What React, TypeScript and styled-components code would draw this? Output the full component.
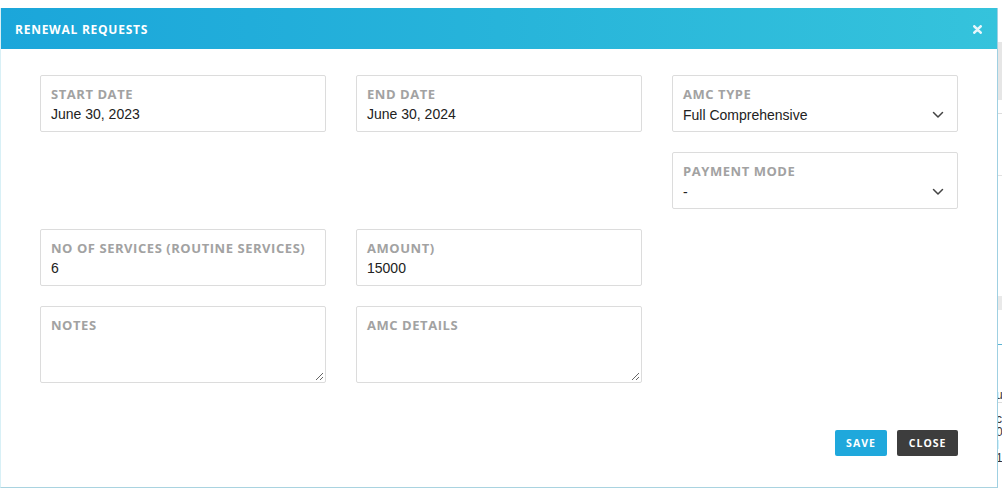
import React from "react";
import styled, { createGlobalStyle } from "styled-components";

const GlobalStyle = createGlobalStyle`
  html, body {
    margin: 0;
    padding: 0;
    background: #ffffff;
  }
  body {
    font-family: "Liberation Sans", Arial, sans-serif;
  }
  * {
    box-sizing: border-box;
  }
`;

const Page = styled.div`
  display: flex;
  width: 1002px;
  height: 493px;
  overflow: hidden;
`;

const Modal = styled.section`
  width: 998px;
  height: 480px;
  margin-top: 8px;
  display: flex;
  flex-direction: column;
  background: #ffffff;
  border-right: 1px solid #9fd0e2;
  border-bottom: 1px solid #a9d3e0;
  border-left: 1px solid #d8f0f6;
`;

const Header = styled.header`
  height: 41px;
  flex: none;
  display: flex;
  align-items: center;
  justify-content: space-between;
  padding: 1px 14px 0 14px;
  background: linear-gradient(90deg, #1ba6da 0%, #27b4da 50%, #35c3dc 100%);
`;

const Title = styled.h1`
  margin: 0;
  font-family: "Open Sans", sans-serif;
  font-size: 12px;
  font-weight: 700;
  letter-spacing: 0.75px;
  color: #ffffff;
  text-transform: uppercase;
`;

const CloseIcon = styled.button`
  width: 12px;
  height: 12px;
  padding: 0;
  border: none;
  background: none;
  display: flex;
  align-items: center;
  justify-content: center;
  cursor: pointer;
`;

const Body = styled.div`
  flex: 1;
  display: flex;
  flex-direction: column;
  padding: 26px 39px 30px 39px;
`;

const FormGrid = styled.div`
  display: grid;
  grid-template-columns: 286px 286px 286px;
  grid-template-rows: 57px 57px 57px 77px;
  column-gap: 30px;
  row-gap: 20px;
  grid-template-areas:
    "start end amc"
    ". . pay"
    "svc amt ."
    "notes details .";
`;

const Field = styled.div<{ $area: string }>`
  grid-area: ${({ $area }) => $area};
  display: flex;
  flex-direction: column;
  border: 1px solid #dcdcdc;
  border-radius: 2px;
  padding: 10px 13px 0 10px;
  background: #ffffff;
`;

const Label = styled.label`
  font-family: "Open Sans", sans-serif;
  font-size: 13px;
  line-height: 16px;
  font-weight: 700;
  letter-spacing: 0.55px;
  color: #a2a2a2;
  text-transform: uppercase;
`;

const Value = styled.div`
  margin-top: 3px;
  font-size: 14px;
  line-height: 18px;
  color: #222222;
`;

const SelectRow = styled.div`
  margin-top: 4px;
  display: flex;
  align-items: center;
  justify-content: space-between;
  font-size: 14px;
  line-height: 18px;
  color: #222222;
`;

const TextArea = styled.textarea`
  flex: 1;
  margin: 0 -12px 1px 0;
  border: none;
  outline: none;
  resize: vertical;
  padding: 0;
  font-family: "Liberation Sans", Arial, sans-serif;
  font-size: 14px;
  background: transparent;
`;

const Footer = styled.div`
  margin-top: 47px;
  display: flex;
  justify-content: flex-end;
  gap: 10px;
`;

const Button = styled.button<{ $variant: "primary" | "dark" }>`
  height: 26px;
  padding: 0 11.5px;
  border: none;
  border-radius: 2px;
  font-family: "Open Sans", sans-serif;
  font-size: 10.5px;
  font-weight: 700;
  letter-spacing: 1px;
  color: #ffffff;
  background: ${({ $variant }) => ($variant === "primary" ? "#1fa8dc" : "#3d3d3d")};
  cursor: pointer;
`;

const Backdrop = styled.div`
  flex: 1;
  display: flex;
  flex-direction: column;
  background: #ffffff;
  overflow: hidden;
`;

const BackdropBlock = styled.div<{ $h: number; $color: string }>`
  height: ${({ $h }) => $h}px;
  flex: none;
  background: ${({ $color }) => $color};
`;

const BackdropText = styled.div`
  font-size: 12px;
  line-height: 13px;
  color: #333;
  white-space: nowrap;
  margin-left: -2px;
`;

const Chevron = () => (
  <svg width="12" height="8" viewBox="0 0 12 8">
    <path d="M1.5 1.5 L6 6 L10.5 1.5" fill="none" stroke="#444" strokeWidth="1.5" strokeLinecap="round" strokeLinejoin="round" />
  </svg>
);

export default function App() {
  return (
    <>
      <GlobalStyle />
      <Page>
        <Modal>
          <Header>
            <Title>Renewal Requests</Title>
            <CloseIcon aria-label="Close">
              <svg width="9" height="9" viewBox="0 0 9 9">
                <path d="M1.3 1.3 L7.7 7.7 M7.7 1.3 L1.3 7.7" stroke="#e8f6fb" strokeWidth="2.6" strokeLinecap="round" />
              </svg>
            </CloseIcon>
          </Header>
          <Body>
            <FormGrid>
              <Field $area="start">
                <Label>Start Date</Label>
                <Value>June 30, 2023</Value>
              </Field>
              <Field $area="end">
                <Label>End Date</Label>
                <Value>June 30, 2024</Value>
              </Field>
              <Field $area="amc">
                <Label>AMC Type</Label>
                <SelectRow>
                  <span>Full Comprehensive</span>
                  <Chevron />
                </SelectRow>
              </Field>
              <Field $area="pay">
                <Label>Payment Mode</Label>
                <SelectRow>
                  <span>-</span>
                  <Chevron />
                </SelectRow>
              </Field>
              <Field $area="svc">
                <Label>No of Services (Routine Services)</Label>
                <Value>6</Value>
              </Field>
              <Field $area="amt">
                <Label>Amount)</Label>
                <Value>15000</Value>
              </Field>
              <Field $area="notes">
                <Label>Notes</Label>
                <TextArea />
              </Field>
              <Field $area="details">
                <Label>AMC Details</Label>
                <TextArea />
              </Field>
            </FormGrid>
            <Footer>
              <Button $variant="primary">SAVE</Button>
              <Button $variant="dark">CLOSE</Button>
            </Footer>
          </Body>
        </Modal>
        <Backdrop>
          <BackdropBlock $h={42} $color="#ffffff" />
          <BackdropBlock $h={58} $color="#e6e6e6" />
          <BackdropBlock $h={13} $color="#ffffff" />
          <BackdropBlock $h={1} $color="#dddddd" />
          <BackdropBlock $h={61} $color="#ffffff" />
          <BackdropBlock $h={1} $color="#e2e2e2" />
          <BackdropBlock $h={120} $color="#ffffff" />
          <BackdropBlock $h={14} $color="#e9e9e9" />
          <BackdropBlock $h={34} $color="#ffffff" />
          <BackdropBlock $h={1} $color="#59b3d3" />
          <BackdropBlock $h={44} $color="#ffffff" />
          <BackdropText>u</BackdropText>
          <BackdropBlock $h={1} $color="#dddddd" />
          <BackdropBlock $h={10} $color="#ffffff" />
          <BackdropText>c</BackdropText>
          <BackdropText>0</BackdropText>
          <BackdropText>l</BackdropText>
          <BackdropText>1</BackdropText>
        </Backdrop>
      </Page>
    </>
  );
}
